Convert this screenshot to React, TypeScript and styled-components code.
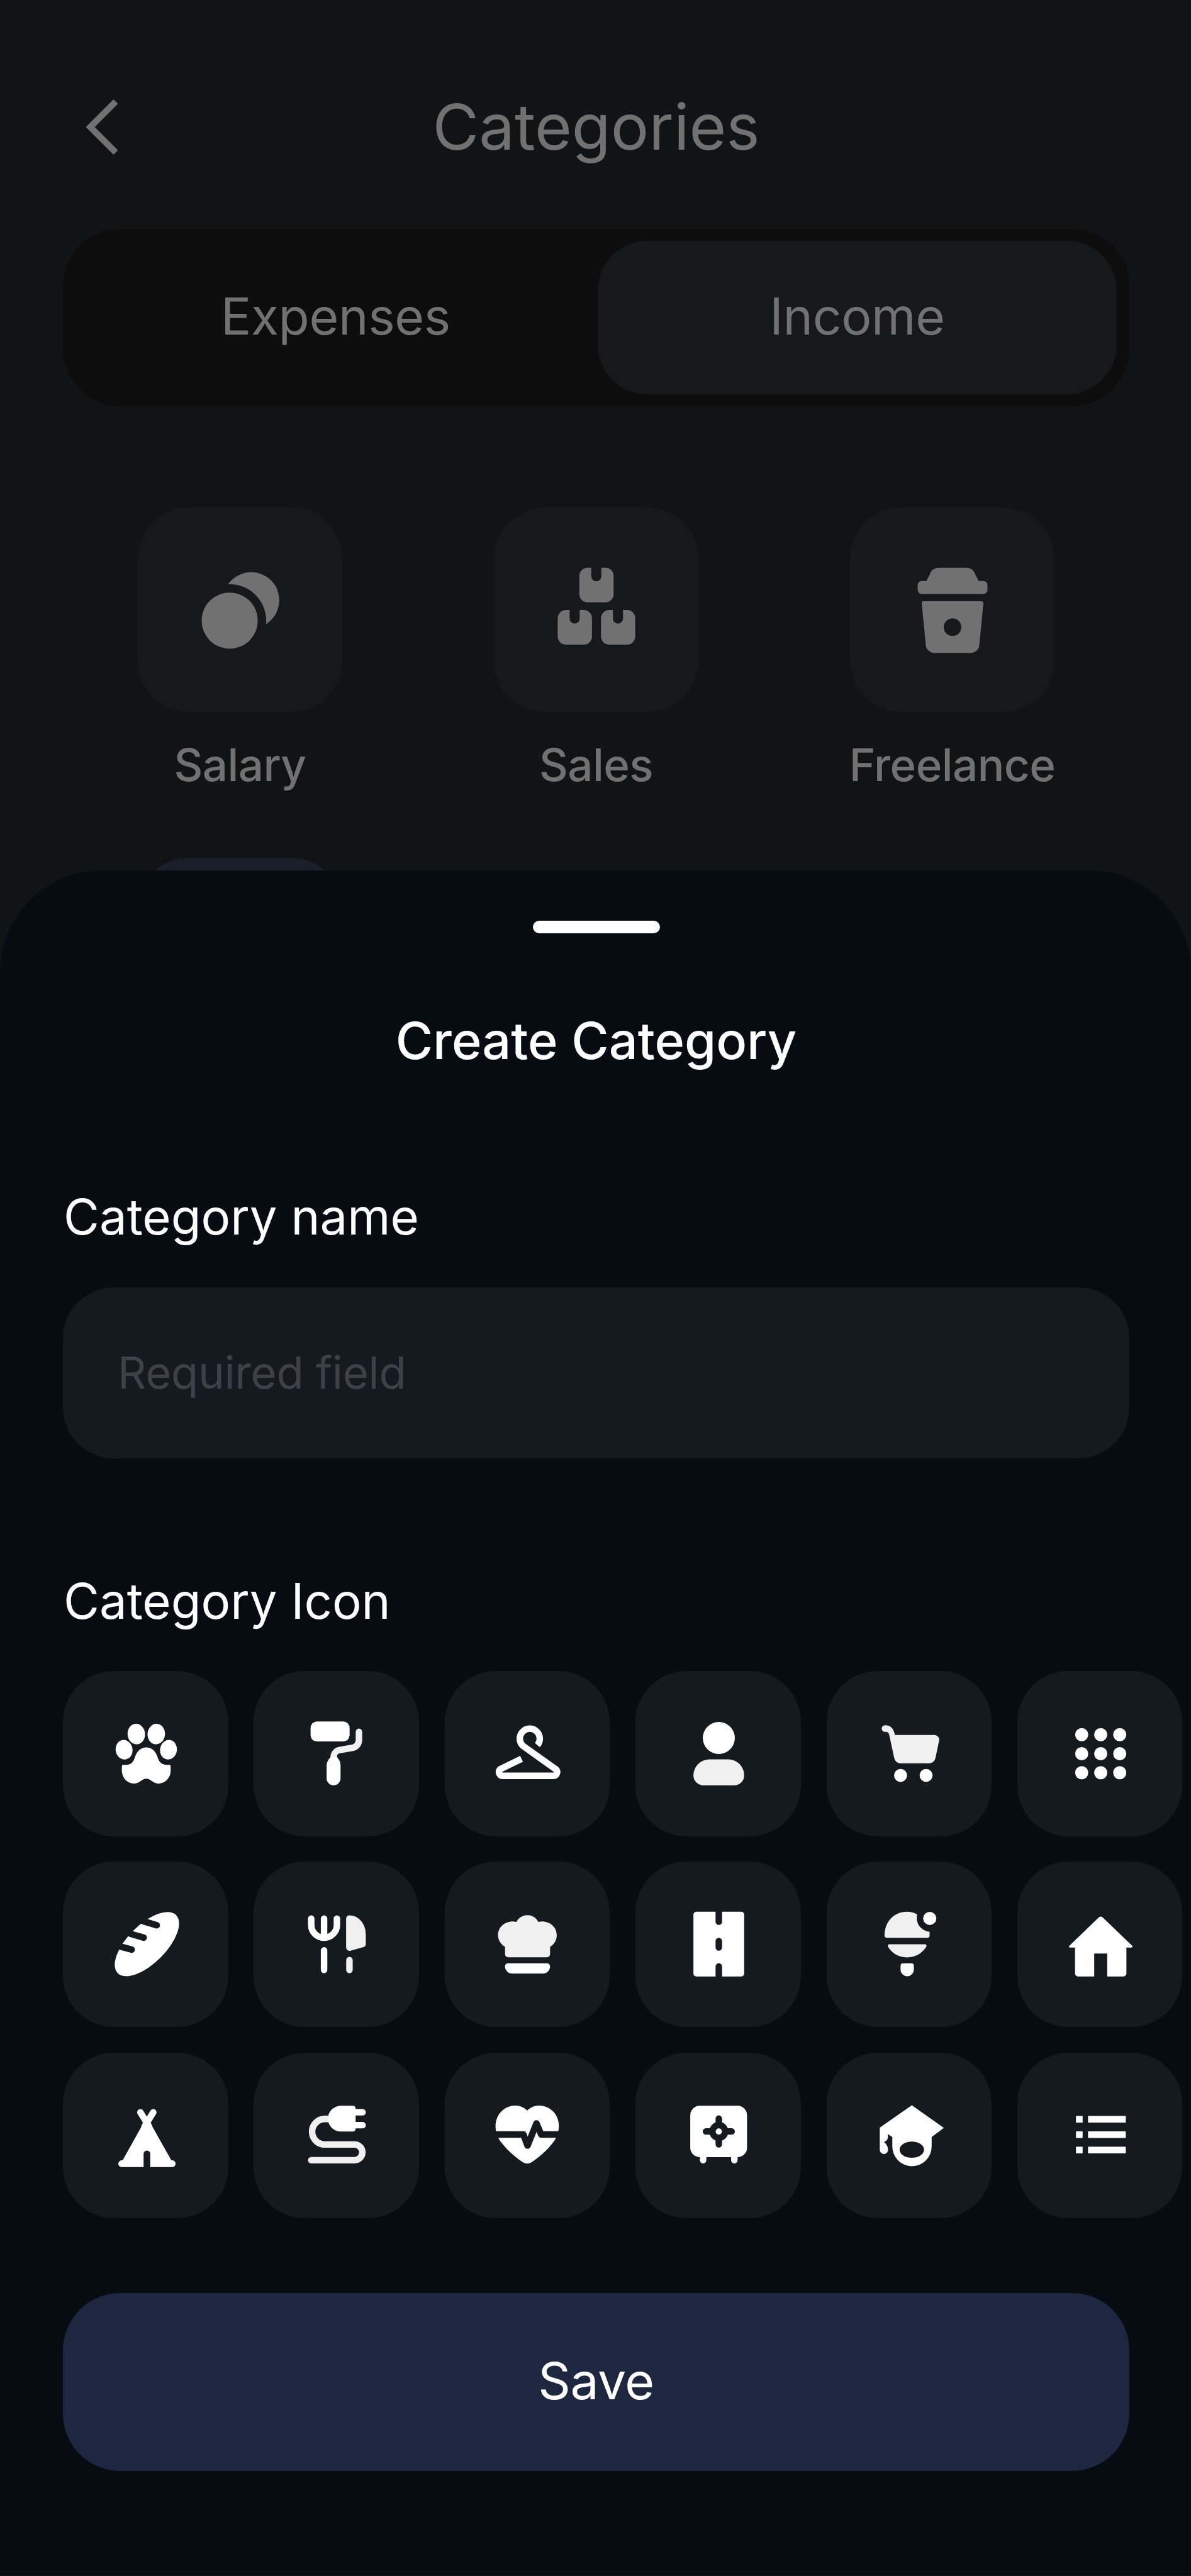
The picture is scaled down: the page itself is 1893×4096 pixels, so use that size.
import React from 'react';
import styled, { createGlobalStyle } from 'styled-components';

const GlobalStyle = createGlobalStyle`
  *, *::before, *::after { box-sizing: border-box; }
  html, body { margin: 0; padding: 0; background: #121315; }
  body { font-family: Inter, 'Liberation Sans', sans-serif; -webkit-font-smoothing: antialiased; }
  button, input { font: inherit; border: 0; margin: 0; padding: 0; }
`;

const Screen = styled.div`
  position: relative;
  width: 1893px;
  height: 4096px;
  overflow: hidden;
  background: #121315;
`;

const Page = styled.main`
  display: flex;
  flex-direction: column;
  padding: 141px 98px 0 100px;
  color: #717171;
`;

const Header = styled.header`
  display: grid;
  grid-template-columns: 121px 1fr 121px;
  align-items: center;
  height: 121px;
`;

const BackButton = styled.button`
  display: flex;
  justify-content: center;
  align-items: center;
  height: 121px;
  padding-left: 4px;
  background: none;
  color: inherit;
`;

const PageTitle = styled.h1`
  margin: 0;
  text-align: center;
  font-size: 101px;
  font-weight: 400;
  line-height: 121px;
`;

const Tabs = styled.div`
  display: grid;
  grid-template-columns: 1fr 1fr;
  gap: 4px;
  height: 282px;
  margin-top: 101.5px;
  padding: 19px 20px 19px 21px;
  border-radius: 91px;
  background: #0d0d0d;
`;

const Tab = styled.button<{ $active?: boolean }>`
  padding-bottom: 4px;
  border-radius: 79px;
  background: ${({ $active }) => ($active ? '#17181c' : 'transparent')};
  color: inherit;
  font-size: 80.5px;
  letter-spacing: -0.4px;
  line-height: 98px;
`;

const CategoryGrid = styled.div`
  display: grid;
  grid-template-columns: repeat(3, 566px);
  justify-content: center;
  row-gap: 105px;
  margin-top: 161px;
`;

const Category = styled.div`
  display: flex;
  flex-direction: column;
  align-items: center;
  gap: 42.5px;
`;

const CategoryTile = styled.div<{ $accent?: boolean }>`
  display: flex;
  justify-content: center;
  align-items: center;
  width: 325px;
  height: 325px;
  border-radius: 81px;
  background: ${({ $accent }) => ($accent ? '#1a1e28' : '#17181c')};
`;

const CategoryLabel = styled.span`
  font-size: 71px;
  font-weight: 550;
  letter-spacing: -0.6px;
  line-height: 85px;
`;

const Sheet = styled.section`
  position: absolute;
  inset: 1384px 0 1px 0;
  display: flex;
  flex-direction: column;
  padding: 80px 98px 0 100px;
  border-radius: 162px 162px 0 0;
  background: #070c13;
  color: #fff;
`;

const Handle = styled.div`
  align-self: center;
  width: 202px;
  height: 20px;
  border-radius: 10px;
  background: #fff;
`;

const SheetTitle = styled.h2`
  margin: 122px 0 0;
  text-align: center;
  font-size: 81px;
  font-weight: 530;
  line-height: 98px;
`;

const FieldLabel = styled.label<{ $top: number }>`
  margin-top: ${({ $top }) => $top}px;
  padding-left: 1px;
  font-size: 77.9px;
  line-height: 92px;
`;

const NameInput = styled.input`
  width: 100%;
  height: 272px;
  margin-top: 65.5px;
  padding: 0 87px;
  border-radius: 81px;
  background: #151920;
  color: #fff;
  font-size: 70.7px;
  font-weight: 400;
  letter-spacing: -0.3px;
  outline: none;
  &::placeholder { color: #3e4149; opacity: 1; }
`;

const IconGrid = styled.div`
  display: grid;
  grid-template-columns: repeat(6, 262.5px);
  grid-auto-rows: 263px;
  gap: 40.5px 40.9px;
  margin-top: 65px;
`;

const IconTile = styled.button`
  display: flex;
  justify-content: center;
  align-items: center;
  padding-left: 2px;
  border-radius: 81px;
  background: #151920;
  color: #fff;
`;

const SaveButton = styled.button`
  height: 283px;
  margin-top: 119.5px;
  padding-bottom: 3px;
  border-radius: 91px;
  background: #1e2740;
  color: #fff;
  font-size: 80.5px;
  letter-spacing: -0.4px;
  line-height: 98px;
`;

const soft = '#f0f0f0';
const hole = '#151920';

const Glyph = ({ children }: { children: React.ReactNode }) => (
  <svg width="121" height="121" viewBox="0 0 24 24" fill="currentColor">{children}</svg>
);

const BigGlyph = ({ children }: { children: React.ReactNode }) => (
  <svg width="150" height="150" viewBox="-75 -75 150 150" fill="currentColor">{children}</svg>
);

const Line = ({ d, color = 'currentColor', w = 2.05, cap = 'round' }: { d: string; color?: string; w?: number; cap?: 'round' | 'butt' }) => (
  <path d={d} fill="none" stroke={color} strokeWidth={w} strokeLinecap={cap} strokeLinejoin="round" />
);

const Coins = () => (
  <BigGlyph>
    <circle cx="17.3" cy="-14.6" r="44.6" />
    <circle cx="-16.9" cy="17.9" r="58" fill="#17181c" />
    <circle cx="-16.9" cy="17.9" r="44.6" />
  </BigGlyph>
);

const box = 'M12 0H19V13.5A8 8 0 0 0 35 13.5V0H42A13 13 0 0 1 54.5 13V42A13 13 0 0 1 42 55H13A13 13 0 0 1 0 42V13A13 13 0 0 1 12 0Z';
const Boxes = () => (
  <BigGlyph>
    <path d={box} transform="translate(-27.2 -66.2)" />
    <path d={box} transform="translate(-61.6 1)" />
    <path d={box} transform="translate(7.2 1)" />
  </BigGlyph>
);

const Cup = () => (
  <BigGlyph>
    <path d="M-22-66.2H22C29-66.2 34-62 36-56L41.5-45.2H49A6.5 6.5 0 0 1 55.5-38.7V-31A6.5 6.5 0 0 1 49-24.6H-49A6.5 6.5 0 0 1-55.5-31V-38.7A6.5 6.5 0 0 1-49-45.2H-41.5L-36-56C-34-62-29-66.2-22-66.2Z" />
    <path fillRule="evenodd" d="M-46-12.9H46A3.5 3.5 0 0 1 49-9.5L42.5 57A14 14 0 0 1 28.5 69.3H-28.5A14 14 0 0 1-42.5 57L-49-9.5A3.5 3.5 0 0 1-46-12.9ZM0 14.3A14 14 0 1 0 0 42.3A14 14 0 1 0 0 14.3Z" />
  </BigGlyph>
);

const Paw = () => (
  <Glyph>
    <ellipse cx="8.85" cy="5.8" rx="2.75" ry="3.25" transform="rotate(-6 8.85 5.8)" />
    <ellipse cx="15.15" cy="5.8" rx="2.75" ry="3.25" transform="rotate(6 15.15 5.8)" />
    <ellipse cx="5" cy="10.75" rx="2.65" ry="3.1" transform="rotate(-10 5 10.75)" />
    <ellipse cx="19" cy="10.75" rx="2.65" ry="3.1" transform="rotate(10 19 10.75)" />
    <path d="M12 10C10.2 10 9 11.3 8.5 12.9C8 14.6 7.2 15.5 5.7 15.5H4.4C4.3 16 4.3 16.5 4.3 17.2C4.3 19.5 5.9 21.4 8.2 21.4C10 21.4 10.5 19.9 12 19.9S14 21.4 15.8 21.4C18.1 21.4 19.7 19.5 19.7 17.2C19.7 16.5 19.7 16 19.6 15.5H18.3C16.8 15.5 16 14.6 15.5 12.9C15 11.3 13.8 10 12 10Z" />
  </Glyph>
);

const Roller = () => (
  <Glyph>
    <Line color={soft} d="M18.95 5.1V7.7A2.5 2.5 0 0 1 16.9 10.15L12.9 10.85A2.2 2.2 0 0 0 11 13V14" />
    <rect x="3.7" y="1.85" width="12.3" height="6.3" rx="2" />
    <path d="M10 13H12L12.7 14A3 3 0 0 1 13.15 15.5V19.75A2.2 2.2 0 0 1 8.75 19.75V15.5A3 3 0 0 1 9.3 14Z" />
  </Glyph>
);

const Hanger = () => (
  <Glyph>
    <Line cap="butt" d="M14.9 9.3A3.15 3.15 0 1 0 10.3 9.5L20.7 16.9A1.2 1.2 0 0 1 20 19H3.9A1.2 1.2 0 0 1 3.2 16.9L9.9 13.6" />
  </Glyph>
);

const Person = () => (
  <Glyph>
    <circle cx="12" cy="7.05" r="5.05" />
    <path fill={soft} d="M9 13.8H15A5 5 0 0 1 20 18.8A3.1 3.1 0 0 1 16.9 21.95H7.1A3.1 3.1 0 0 1 4 18.8A5 5 0 0 1 9 13.8Z" />
  </Glyph>
);

const Cart = () => (
  <Glyph>
    <path fill={soft} d="M4.3 3C6.2 3 7.1 4.2 7.4 6.1H19.9A1.5 1.5 0 0 1 21.35 7.9L20.2 13.4A2 2 0 0 1 18.2 15H9.2A2 2 0 0 1 7.2 13.4L5.65 6.2C5.5 5.4 5.2 5.1 4.3 5.1A1.05 1.05 0 0 1 4.3 3Z" />
    <circle cx="9.2" cy="18.85" r="2.05" />
    <circle cx="17.25" cy="18.85" r="2.05" />
  </Glyph>
);

const Dots = () => (
  <Glyph>
    {[6, 12, 18].map((y) => [6, 12, 18].map((x) => <circle key={`${x}-${y}`} cx={x} cy={y} r="2.07" />))}
  </Glyph>
);

const Bread = () => (
  <Glyph>
    <ellipse cx="12.2" cy="11.95" rx="13" ry="6.05" transform="rotate(-45 12.2 11.95)" />
    <Line color={hole} d="M11 4.7L15.3 6" />
    <Line color={hole} d="M7 8.7L11.2 9.9" />
    <Line color={hole} d="M3 12.5L7.4 13.7" />
  </Glyph>
);

const Cutlery = () => (
  <Glyph>
    <Line d="M3.9 3.9V5.9A4.05 4.05 0 0 0 12 5.9V3.9M7.95 3.9V9.8M7.95 13.9V20.1" />
    <path fill={soft} d="M14.9 3.9A1 1 0 0 1 16 2.9C19 3 21.1 5.6 21.1 9V11.9A1 1 0 0 1 20.4 12.9L16.3 14.05A1.1 1.1 0 0 1 14.9 13Z" />
    <Line color={soft} d="M15.95 17V20.1" />
  </Glyph>
);

const ChefHat = () => (
  <Glyph>
    <path fill={soft} d="M8.3 4.95C8.9 3.7 10.2 2.85 11.75 2.85S14.6 3.7 15.2 4.95C18.3 4.3 21 6.3 21 9.1C21 10.7 20.2 12 18.9 12.8V15.1A1 1 0 0 1 17.9 16.1H5.7A1 1 0 0 1 4.7 15.1V12.8C3.4 12 2.5 10.7 2.5 9.1C2.5 6.3 5.2 4.3 8.3 4.95Z" />
    <path d="M5.6 18H17.9A1 1 0 0 1 18.9 19A2.2 2.2 0 0 1 16.7 21.2H6.9A2.2 2.2 0 0 1 4.7 19A1 1 0 0 1 5.6 18Z" />
  </Glyph>
);

const Road = () => (
  <Glyph>
    <rect x="4" y="1.75" width="16" height="20.4" rx=".9" />
    <Line color={hole} d="M12 .8V4.9M12 11V13M12 19V23" />
  </Glyph>
);

const IceCream = () => (
  <Glyph>
    <path fill={soft} d="M11.25 1.75C12.4 1.75 13.4 1.95 14.4 2.6C13.9 5.5 15.4 7.5 18.35 8.1V9.3A.7.7 0 0 1 17.7 9.95H4.8A.7.7 0 0 1 4.15 9.3C4.1 5 7 1.75 11.25 1.75Z" />
    <circle cx="18.4" cy="3.85" r="2.08" />
    <path fill={soft} d="M5.6 12H16.9A.5.5 0 0 1 17.3 12.8C16 14.9 13.8 16.15 11.25 16.15S6.5 14.9 5.25 12.8A.5.5 0 0 1 5.6 12Z" />
    <path d="M10 18H12.6A.8.8 0 0 1 13.4 18.8V20A2.1 2.1 0 0 1 9.2 20V18.8A.8.8 0 0 1 10 18Z" />
  </Glyph>
);

const House = () => (
  <Glyph>
    <path d="M11.4 3.5A.95.95 0 0 1 12.6 3.5L22 12.55Q22.1 13 21.7 13.05H20.1V21.2A.95.95 0 0 1 19.1 22.15H14.05V14.95H9.95V22.15H4.9A.95.95 0 0 1 3.9 21.2V13.05H2.3Q1.9 13 2.05 12.55Z" />
  </Glyph>
);

const Tent = () => (
  <Glyph>
    <Line d="M10.15 4.7L12.9 9.2M14.2 4.7L11.45 9.2" />
    <path d="M11 8.3H13.4L19.9 19.85A1.05 1.05 0 0 1 20.4 21.95H13.25V17.8A1.05 1.05 0 0 0 11.15 17.8V21.95H4A1.05 1.05 0 0 1 4.55 19.85Z" />
  </Glyph>
);

const Plug = () => (
  <Glyph>
    <Line color={soft} d="M10 6.8H8A4.03 4.03 0 0 0 8 14.85H17.55A2.47 2.47 0 0 1 17.55 19.8H3.9" />
    <path d="M13.2 2.65H17A.95.95 0 0 1 17.9 3.6V9.8A.95.95 0 0 1 17 10.75H13.2A4.05 4.05 0 0 1 13.2 2.65Z" />
    <Line d="M17 4.7H20.1M17 8.75H20.1" />
  </Glyph>
);

const HeartPulse = () => (
  <Glyph>
    <path d="M11.7 4.15C13.6 2.2 16.6 2.1 18.9 3.6C22.4 6 22.5 10.9 19.8 14.3C17.7 17 15.2 19.1 13 20.5Q11.7 21.3 10.4 20.5C8.2 19.1 5.7 17 3.6 14.3C.9 10.9 1 6 4.5 3.6C6.8 2.1 9.8 2.2 11.7 4.15Z" />
    <Line color={hole} cap="butt" d="M0 11.7H10.5L11.8 15.2L14.6 8.2L16.1 11.7H24" />
  </Glyph>
);

const Safe = () => (
  <Glyph>
    <rect x="3" y="2.65" width="17.9" height="16.2" rx="3" />
    <Line d="M7.05 18V19.8M16.9 18V19.8" />
    <circle cx="12" cy="10.75" r="3" fill={hole} />
    <Line color={hole} d="M12 6.7V14.8M7.95 10.75H16.05" />
    <circle cx="12" cy="10.75" r="1" />
  </Glyph>
);

const Graduation = () => (
  <Glyph>
    <path fillRule="evenodd" d="M12.75 2.5L22.85 9.6L19 12.5V15.5A6.2 6.2 0 0 1 6.6 15.5V12.5L5.2 11.6V12.9Q4.9 13.7 3.95 14.1Q5.25 15 5.25 16.55A1.3 1.3 0 0 1 2.65 16.55V9.5ZM12.75 13.95C10.6 13.95 8.9 15.1 8.9 16.5S10.6 19.05 12.75 19.05S16.6 17.9 16.6 16.5S14.9 13.95 12.75 13.95Z" />
  </Glyph>
);

const List = () => (
  <Glyph>
    {[5.85, 10.7, 15.55].map((y) => (
      <React.Fragment key={y}>
        <rect x="4.2" y={y} width="2.1" height="2.1" />
        <rect x="8" y={y} width="11.9" height="2.1" />
      </React.Fragment>
    ))}
  </Glyph>
);

const categories = [
  { name: 'Salary', Icon: Coins },
  { name: 'Sales', Icon: Boxes },
  { name: 'Freelance', Icon: Cup },
];

const icons = [
  Paw, Roller, Hanger, Person, Cart, Dots,
  Bread, Cutlery, ChefHat, Road, IceCream, House,
  Tent, Plug, HeartPulse, Safe, Graduation, List,
];

export default function App() {
  return (
    <>
      <GlobalStyle />
      <Screen>
        <Page>
          <Header>
            <BackButton aria-label="Back">
              <svg width="60" height="92" viewBox="0 0 60 92" fill="none" stroke="currentColor" strokeWidth="10">
                <path d="M51 5.5L10.5 46L51 86.5" />
              </svg>
            </BackButton>
            <PageTitle>Categories</PageTitle>
          </Header>
          <Tabs>
            <Tab>Expenses</Tab>
            <Tab $active>Income</Tab>
          </Tabs>
          <CategoryGrid>
            {categories.map(({ name, Icon }) => (
              <Category key={name}>
                <CategoryTile><Icon /></CategoryTile>
                <CategoryLabel>{name}</CategoryLabel>
              </Category>
            ))}
            <Category>
              <CategoryTile $accent />
            </Category>
          </CategoryGrid>
        </Page>
        <Sheet>
          <Handle />
          <SheetTitle>Create Category</SheetTitle>
          <FieldLabel $top={185} htmlFor="category-name">Category name</FieldLabel>
          <NameInput id="category-name" placeholder="Required field" />
          <FieldLabel as="span" $top={181}>Category Icon</FieldLabel>
          <IconGrid>
            {icons.map((Icon, i) => (
              <IconTile key={i}><Icon /></IconTile>
            ))}
          </IconGrid>
          <SaveButton>Save</SaveButton>
        </Sheet>
      </Screen>
    </>
  );
}
